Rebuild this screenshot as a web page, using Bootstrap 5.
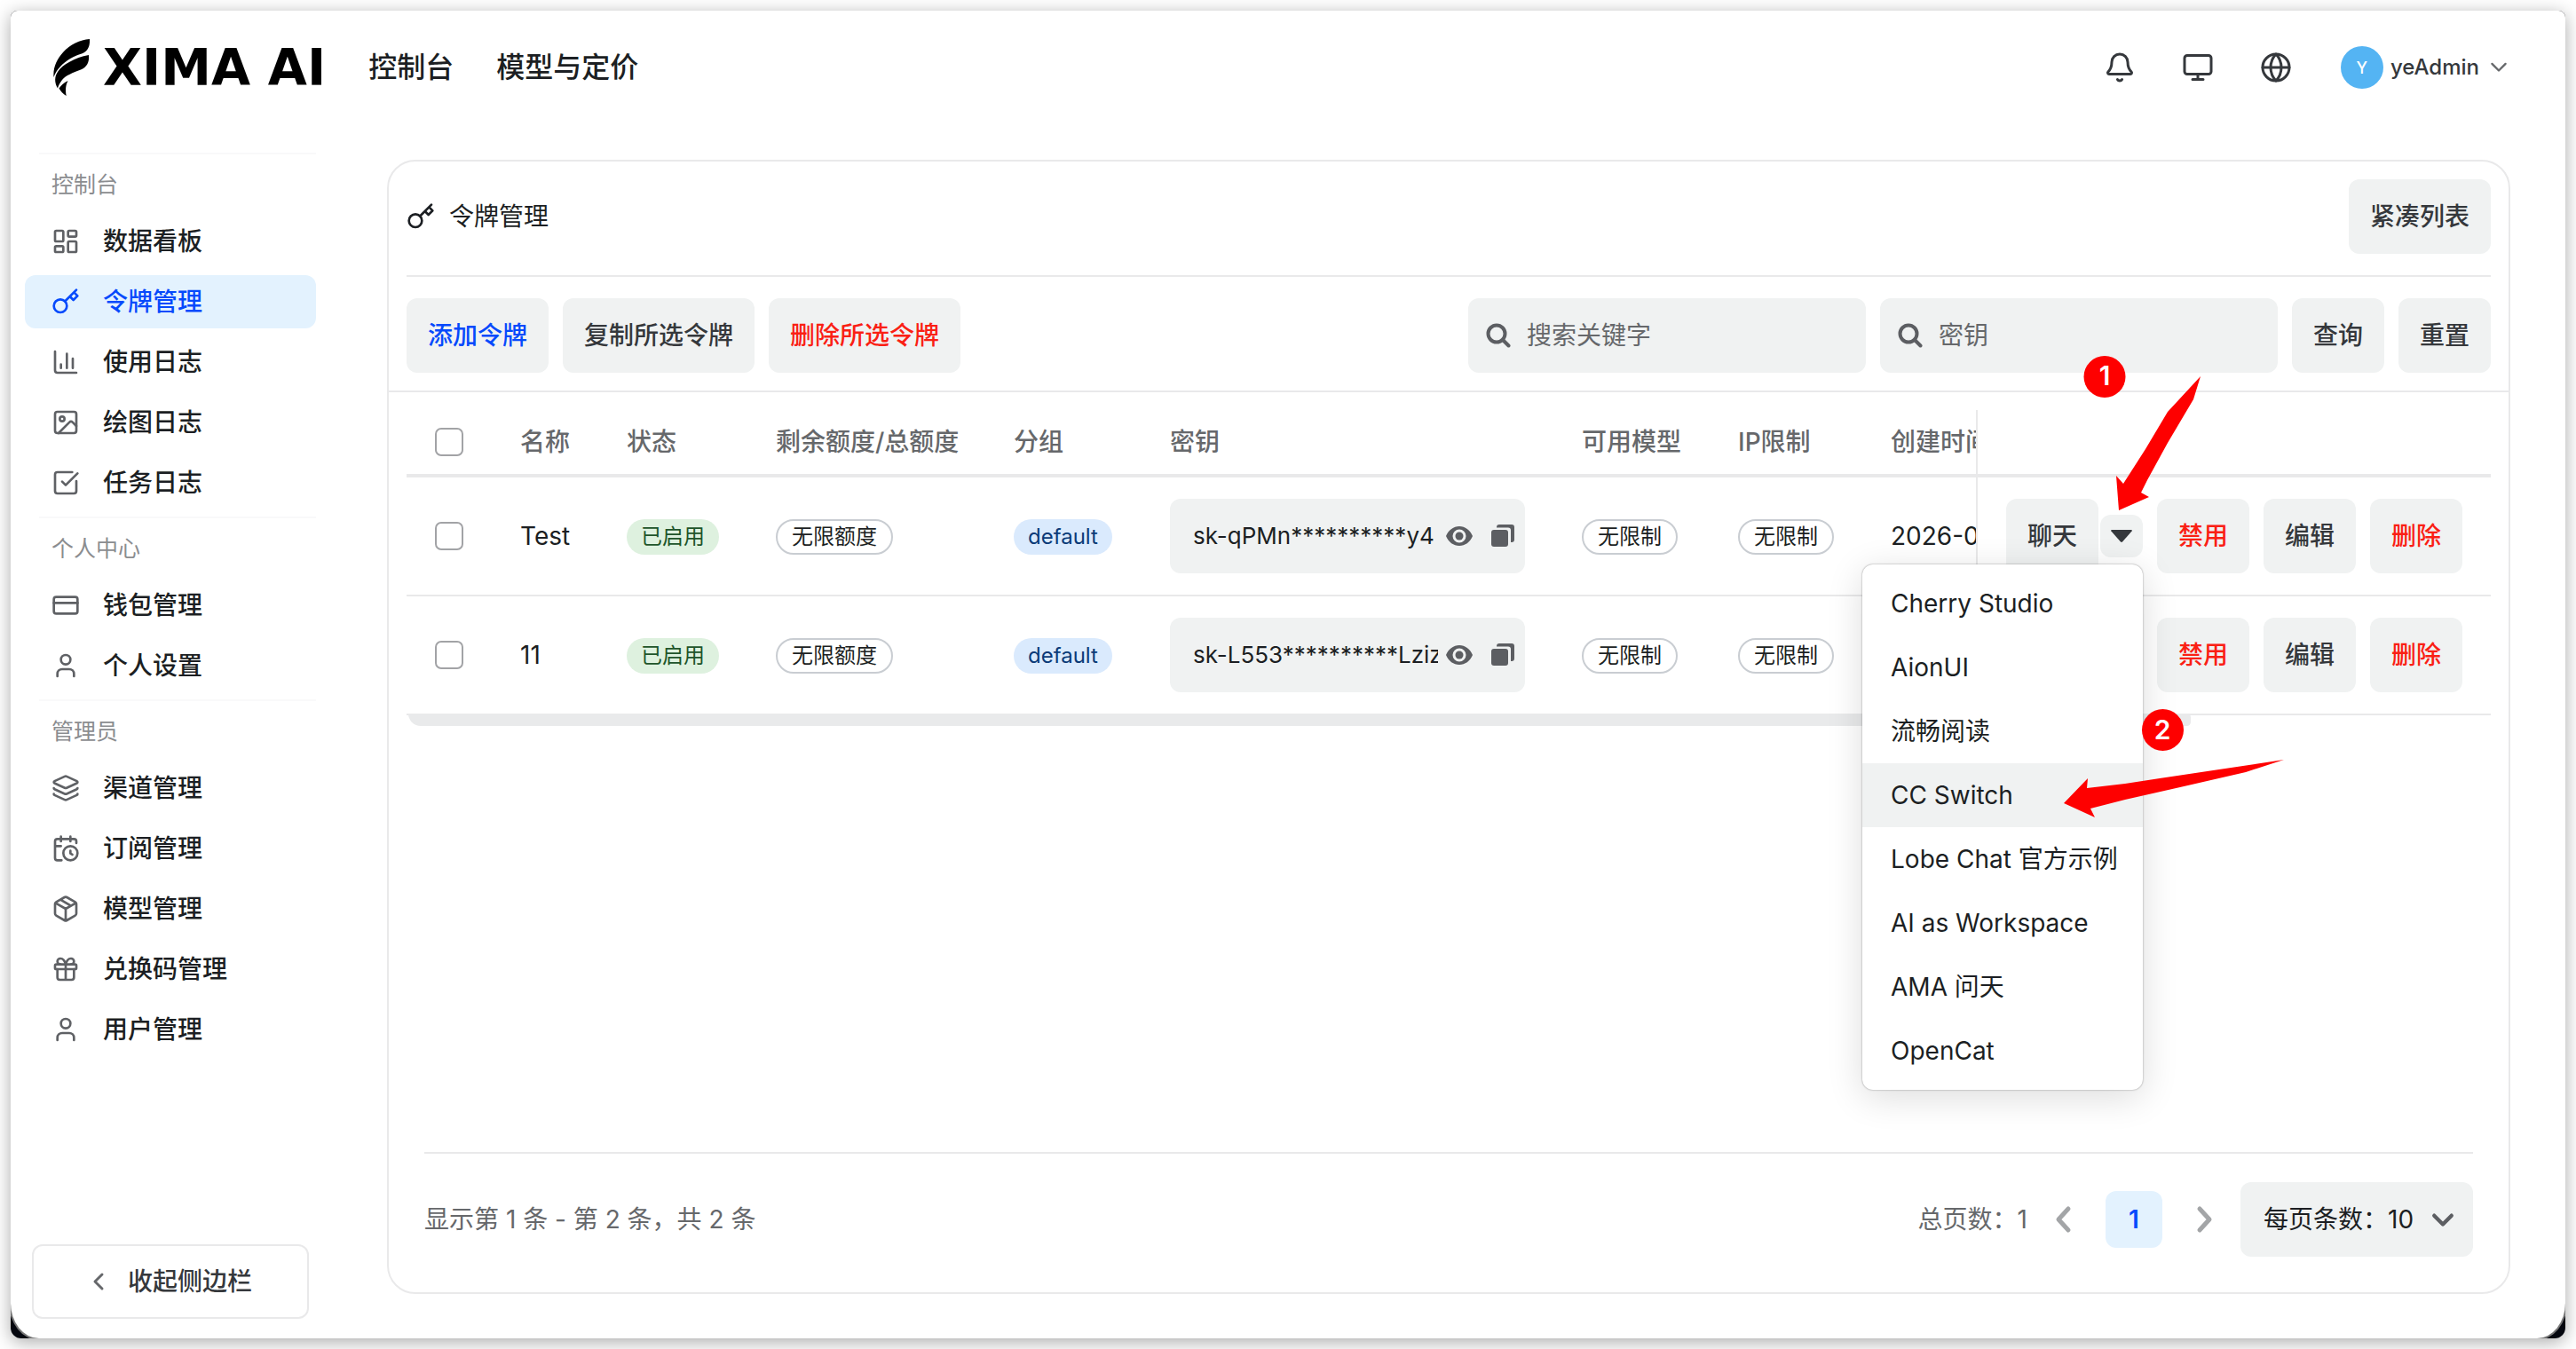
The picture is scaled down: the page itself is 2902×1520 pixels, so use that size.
<!DOCTYPE html>
<html lang="zh-CN">
<head>
<meta charset="utf-8">
<meta name="viewport" content="width=device-width, initial-scale=1">
<title>令牌管理 - XIMA AI</title>
<link href="https://cdn.jsdelivr.net/npm/bootstrap@5.3.0/dist/css/bootstrap.min.css" rel="stylesheet">
<style>
:root{--line:#e9e9ea;--fill:#f0f2f2;--ink:#1c1f23;--ink2:#66686b;--ink3:#8b8d90;--blue:#064afc;--blue-bg:#e3f2fe;--red:#fa2014}
body{font-family:Inter,"Noto Sans CJK SC",sans-serif;font-size:28px;line-height:40px;color:var(--ink);background:#fff;min-height:100vh;padding:12px}
svg{display:block;flex:none}
.ico{fill:none;stroke:currentColor;stroke-width:2;stroke-linecap:round;stroke-linejoin:round}
.frame{flex:1;background:#05070f;border-radius:8px 8px 12px 12px;overflow:hidden;box-shadow:0 4px 20px rgba(0,0,0,.34)}
.sheet{flex:1;background:#fff;border-radius:0 0 32px 32px/0 0 40px 40px;box-shadow:0 0 0 2px #777}
.topbar{height:128px;padding:0 60px 0 48px}
.brand-word{font:bold 57px/64px "DejaVu Sans",sans-serif;color:#000;margin-left:14px}
.topbar .nav-link{font-size:32px;font-weight:500;color:var(--ink);padding:0}
.tool-btn{width:72px;height:72px;padding:0;color:#35383c;display:flex;align-items:center;justify-content:center}
.avatar{width:48px;height:48px;border-radius:50%;background:#54b4f3;color:#fff;font-size:18px;font-weight:500}
.user-btn{font-size:24px;font-weight:500;color:#35383c;padding:0;gap:8px;margin-left:20px}
.side{width:344px;padding:32px 0 22px 16px}
.side-label{border-top:2px solid #f9f9fa;margin-left:16px;padding:16px 14px 16px;font-size:25px;line-height:36px;color:var(--ink3)}
.side-link{display:flex;align-items:center;height:60px;margin-bottom:8px;padding:0 30px;gap:26px;border-radius:12px;color:var(--ink);font-weight:500;text-decoration:none}
.side-link svg{color:#5f6165}
.side-link.active{background:var(--blue-bg);color:var(--blue)}
.side-link.active svg{color:var(--blue)}
.fold-btn{height:84px;margin:0 8px 0 8px;border:2px solid var(--line);border-radius:12px;background:#fff;font-size:28px;font-weight:500;color:#35383c;gap:24px}
.panel{flex:1;border:2px solid var(--line);border-radius:32px;margin:40px 62px 50px 80px}
.soft{height:84px;padding:0 24px;border:0;border-radius:12px;background:var(--fill);color:#35383c;font-size:28px;font-weight:500;white-space:nowrap}
.soft.t-blue,.t-blue{color:var(--blue)}
.soft.t-red,.t-red{color:var(--red)}
.panel-head{margin:0 20px;padding:20px 0 24px;border-bottom:2px solid var(--line)}
.panel-tools{padding:24px 20px 20px;border-bottom:2px solid var(--line);gap:16px}
.find{width:448px;height:84px;border-radius:12px;background:var(--fill);padding:0 20px;gap:18px;color:#5c5e62}
.find input,.keybox input{border:0;background:none;padding:0;font-size:28px;line-height:40px;color:var(--ink);min-width:0;flex:1;outline:0;box-shadow:none}
.keybox input{font-size:26px}
.find input::placeholder{color:var(--ink2);opacity:1}
.grid-wrap{margin:20px 20px 0}
.grid{table-layout:fixed;border-collapse:separate;border-spacing:0;color:var(--ink);margin:0}
.grid th,.grid td{padding:0 32px;border:0 solid var(--line);vertical-align:middle;white-space:nowrap}
.grid th{height:76px;border-bottom-width:4px;color:var(--ink2);font-weight:500}
.grid td{height:134px;border-bottom-width:2px}
.grid .cut{overflow:hidden;padding-right:0;text-overflow:clip}
.grid .ops{border-left-width:2px}
.tick{width:32px;height:32px;margin:0;border:2px solid #a2a3a6;border-radius:6px;display:block;float:none}
.pill{display:inline-block;height:40px;border-radius:20px;padding:0 16px;font-size:24px;line-height:40px;vertical-align:middle}
.p-green{background:#def1df;color:#20542a}
.p-blue{background:#daeafd;color:#0b3b78}
.p-line{border:2px solid #c9cdd2;line-height:36px}
.keybox{height:84px;border-radius:12px;background:var(--fill);padding:0 10px 0 26px;color:#5c5e62}
.keybox button{border:0;background:none;padding:0;color:inherit}
.arrow-btn{width:48px;height:48px;margin-left:2px;border:0;border-radius:12px;background:var(--fill);padding:0;display:flex;align-items:center;justify-content:center;color:#35383c}
.chat-menu{display:block;top:56px;right:0;left:auto;width:316px;padding:8px 0;font-size:28px;border:0;border-radius:12px;color:var(--ink);box-shadow:0 0 2px rgba(0,0,0,.45),0 8px 40px rgba(0,0,0,.14)}
.chat-menu .dropdown-item{height:72px;line-height:72px;padding:0 32px;color:var(--ink)}
.chat-menu .dropdown-item.hot{background:var(--fill)}
.marks{position:absolute;left:-64px;top:-180px;z-index:1100;pointer-events:none}
.marks text{font:600 30px Inter,sans-serif;fill:#fff;text-anchor:middle}
.hbar{position:relative;width:2008px;max-width:86%;height:14px;margin:-2px 0 0 2px;background:#e9eaeb;border-radius:0 6px 6px 20px}
.panel-foot{margin:auto 40px 0;padding:32px 0 40px;border-top:2px solid var(--line);color:var(--ink2)}
.page-btn{width:64px;height:64px;border:0;border-radius:12px;background:none;padding:0;color:#a3a5a7;display:flex;align-items:center;justify-content:center}
.page-btn.on{background:var(--blue-bg);color:var(--blue);font-weight:600}
.thick{stroke-width:5}
.thin{stroke-width:3;color:#66686b}
.caret-down{color:#66686b}
.size-pick{width:262px;height:84px;border:0;border-radius:12px;padding:0 20px 0 26px;font-size:28px;line-height:40px;color:var(--ink);background:var(--fill) url("data:image/svg+xml,%3Csvg xmlns='http://www.w3.org/2000/svg' viewBox='0 0 24 24'%3E%3Cpath d='M3 8l9 9 9-9' fill='none' stroke='%235c5e62' stroke-width='4' stroke-linecap='round' stroke-linejoin='round'/%3E%3C/svg%3E") no-repeat right 21px center/26px 26px}
</style>
</head>
<body class="d-flex">
<div class="frame d-flex">
<div class="sheet d-flex flex-column">

<nav class="topbar d-flex align-items-center">
  <a href="#" class="d-flex align-items-center text-decoration-none">
    <svg width="42" height="66" viewBox="60 43 42 66" aria-hidden="true">
      <path d="M101 44C101.500 52 99 58 92 60.500C84 63 74 68 68 75C64 79 62 83 60.500 87C59.500 76 64 67 71 59C79 50 90 45 101 44Z"/>
      <path d="M100 62C101 71 97 76 91 78.500C82 82 74 85 70 90C67 94 66 96 65 99.500C61 93 61.500 86 65 81C70 73 84 65 100 62Z"/>
      <path d="M76.500 91C74 96 73.500 101 74.700 108C71 106 68.500 103 66.500 99.500C69 96 72 93 76.500 91Z"/>
    </svg>
    <span class="brand-word">XIMA AI</span>
  </a>
  <ul class="nav ms-5 gap-5">
    <li class="nav-item"><a class="nav-link" href="#">控制台</a></li>
    <li class="nav-item"><a class="nav-link" href="#">模型与定价</a></li>
  </ul>
  <div class="d-flex align-items-center gap-3 ms-auto">
    <button class="btn tool-btn" type="button" aria-label="通知"><svg class="ico" width="36" height="36" viewBox="0 0 24 24"><path d="M10.268 21a2 2 0 0 0 3.464 0M3.262 15.326A1 1 0 0 0 4 17h16a1 1 0 0 0 .74-1.673C19.410 13.956 18 12.499 18 8A6 6 0 0 0 6 8c0 4.499-1.411 5.956-2.738 7.326"/></svg></button>
    <button class="btn tool-btn" type="button" aria-label="主题"><svg class="ico" width="36" height="36" viewBox="0 0 24 24"><rect width="20" height="14" x="2" y="3" rx="2"/><path d="M8 21h8M12 17v4"/></svg></button>
    <button class="btn tool-btn" type="button" aria-label="语言"><svg class="ico" width="36" height="36" viewBox="0 0 24 24"><circle cx="12" cy="12" r="10"/><path d="M12 2a14.500 14.500 0 0 0 0 20 14.500 14.500 0 0 0 0-20M2 12h20"/></svg></button>
    <button class="btn user-btn d-flex align-items-center" type="button">
      <span class="avatar d-flex align-items-center justify-content-center">Y</span><span>yeAdmin</span>
      <svg class="ico caret-down" width="28" height="28" viewBox="0 0 24 24"><path d="m5.500 8.500 6.500 6.500 6.500-6.500"/></svg>
    </button>
  </div>
</nav>

<div class="d-flex flex-fill">
<aside class="side d-flex flex-column flex-shrink-0">
  <div class="side-label">控制台</div>
  <a class="side-link" href="#"><svg class="ico" width="32" height="32" viewBox="0 0 24 24"><rect width="7" height="9" x="3" y="3" rx="1"/><rect width="7" height="5" x="14" y="3" rx="1"/><rect width="7" height="9" x="14" y="12" rx="1"/><rect width="7" height="5" x="3" y="16" rx="1"/></svg>数据看板</a>
  <a class="side-link active" href="#" aria-current="page"><svg class="ico" width="32" height="32" viewBox="0 0 24 24"><circle cx="7.500" cy="15.500" r="5.500"/><path d="m21 2-9.600 9.600M15.500 7.500l3 3L22 7l-3-3"/></svg>令牌管理</a>
  <a class="side-link" href="#"><svg class="ico" width="32" height="32" viewBox="0 0 24 24"><path d="M3 3v16a2 2 0 0 0 2 2h16M18 17V9M13 17V5M8 17v-3"/></svg>使用日志</a>
  <a class="side-link" href="#"><svg class="ico" width="32" height="32" viewBox="0 0 24 24"><rect width="18" height="18" x="3" y="3" rx="2"/><circle cx="9" cy="9" r="2"/><path d="m21 15-3.086-3.086a2 2 0 0 0-2.828 0L6 21"/></svg>绘图日志</a>
  <a class="side-link" href="#"><svg class="ico" width="32" height="32" viewBox="0 0 24 24"><path d="M21 10.500V19a2 2 0 0 1-2 2H5a2 2 0 0 1-2-2V5a2 2 0 0 1 2-2h12.500M9 11l3 3L22 4"/></svg>任务日志</a>
  <div class="side-label">个人中心</div>
  <a class="side-link" href="#"><svg class="ico" width="32" height="32" viewBox="0 0 24 24"><rect width="20" height="14" x="2" y="5" rx="2"/><path d="M2 10h20"/></svg>钱包管理</a>
  <a class="side-link" href="#"><svg class="ico" width="32" height="32" viewBox="0 0 24 24"><path d="M19 21v-2a4 4 0 0 0-4-4H9a4 4 0 0 0-4 4v2"/><circle cx="12" cy="7" r="4"/></svg>个人设置</a>
  <div class="side-label">管理员</div>
  <a class="side-link" href="#"><svg class="ico" width="32" height="32" viewBox="0 0 24 24"><path d="M12.830 2.180a2 2 0 0 0-1.660 0L2.600 6.080a1 1 0 0 0 0 1.830l8.580 3.910a2 2 0 0 0 1.660 0l8.580-3.900a1 1 0 0 0 0-1.830zM2 12a1 1 0 0 0 .58.91l8.600 3.910a2 2 0 0 0 1.650 0l8.580-3.900A1 1 0 0 0 22 12M2 17a1 1 0 0 0 .58.91l8.600 3.910a2 2 0 0 0 1.650 0l8.580-3.900A1 1 0 0 0 22 17"/></svg>渠道管理</a>
  <a class="side-link" href="#"><svg class="ico" width="32" height="32" viewBox="0 0 24 24"><path d="M16 14v2.200l1.600 1M16 2v4M21 7.500V6a2 2 0 0 0-2-2H5a2 2 0 0 0-2 2v14a2 2 0 0 0 2 2h3.500M3 10h5M8 2v4"/><circle cx="16" cy="16" r="6"/></svg>订阅管理</a>
  <a class="side-link" href="#"><svg class="ico" width="32" height="32" viewBox="0 0 24 24"><path d="M11 21.730a2 2 0 0 0 2 0l7-4A2 2 0 0 0 21 16V8a2 2 0 0 0-1-1.730l-7-4a2 2 0 0 0-2 0l-7 4A2 2 0 0 0 3 8v8a2 2 0 0 0 1 1.730zM12 22V12M3.290 7 12 12l8.710-5M7.500 4.270l9 5.150"/></svg>模型管理</a>
  <a class="side-link" href="#"><svg class="ico" width="32" height="32" viewBox="0 0 24 24"><rect x="3" y="8" width="18" height="4" rx="1"/><path d="M12 8v13M19 12v7a2 2 0 0 1-2 2H7a2 2 0 0 1-2-2v-7M7.500 8a2.500 2.500 0 0 1 0-5A4.800 8 0 0 1 12 8a4.800 8 0 0 1 4.500-5 2.500 2.500 0 0 1 0 5"/></svg>兑换码管理</a>
  <a class="side-link" href="#"><svg class="ico" width="32" height="32" viewBox="0 0 24 24"><path d="M19 21v-2a4 4 0 0 0-4-4H9a4 4 0 0 0-4 4v2"/><circle cx="12" cy="7" r="4"/></svg>用户管理</a>
  <button class="fold-btn d-flex align-items-center justify-content-center mt-auto" type="button"><svg class="ico thin" width="20" height="32" viewBox="0 0 20 32"><path d="m15 8-8 8 8 8"/></svg>收起侧边栏</button>
</aside>

<main class="panel d-flex flex-column">
  <div class="panel-head d-flex align-items-center justify-content-between">
    <div class="d-flex align-items-center"><svg class="ico" width="32" height="32" viewBox="0 0 24 24"><circle cx="7.500" cy="15.500" r="5.500"/><path d="m21 2-9.600 9.600M15.500 7.500l3 3L22 7l-3-3"/></svg><span class="ms-3">令牌管理</span></div>
    <button class="btn soft" type="button">紧凑列表</button>
  </div>
  <div class="panel-tools d-flex align-items-center">
    <button class="btn soft t-blue" type="button">添加令牌</button>
    <button class="btn soft" type="button">复制所选令牌</button>
    <button class="btn soft t-red" type="button">删除所选令牌</button>
    <label class="find d-flex align-items-center ms-auto"><svg width="28" height="28" viewBox="0 0 28 28" fill="none" stroke="currentColor" stroke-width="4" stroke-linecap="round"><circle cx="12" cy="12" r="9.500"/><path d="m19 19 6.500 6.500"/></svg><input type="text" placeholder="搜索关键字" aria-label="搜索关键字"></label>
    <label class="find d-flex align-items-center"><svg width="28" height="28" viewBox="0 0 28 28" fill="none" stroke="currentColor" stroke-width="4" stroke-linecap="round"><circle cx="12" cy="12" r="9.500"/><path d="m19 19 6.500 6.500"/></svg><input type="text" placeholder="密钥" aria-label="密钥"></label>
    <button class="btn soft" type="button">查询</button>
    <button class="btn soft" type="button">重置</button>
  </div>

  <div class="grid-wrap">
  <table class="table grid">
    <colgroup><col style="width:96px"><col style="width:120px"><col style="width:168px"><col style="width:268px"><col style="width:176px"><col><col style="width:176px"><col style="width:172px"><col style="width:128px"><col style="width:580px"></colgroup>
    <thead><tr>
      <th><input class="form-check-input tick" type="checkbox" aria-label="全选"></th><th>名称</th><th>状态</th><th>剩余额度/总额度</th><th>分组</th><th>密钥</th><th>可用模型</th><th>IP限制</th><th class="cut">创建时间</th><th class="ops"></th>
    </tr></thead>
    <tbody>
    <tr>
      <td><input class="form-check-input tick" type="checkbox" aria-label="选择 Test"></td><td>Test</td>
      <td><span class="pill p-green">已启用</span></td><td><span class="pill p-line">无限额度</span></td><td><span class="pill p-blue">default</span></td>
      <td><div class="keybox d-flex align-items-center"><input type="text" readonly value="sk-qPMn**********y4" aria-label="Test 密钥"><button class="ms-2" type="button" aria-label="显示"><svg width="32" height="32" viewBox="0 0 32 32"><path fill="currentColor" fill-rule="evenodd" d="M1 16C4 9 9.500 5 16 5s12 4 15 11c-3 7-8.500 11-15 11S4 23 1 16ZM16 8.500a7.500 7.500 0 1 0 0 15 7.500 7.500 0 0 0 0-15Z"/><circle cx="16" cy="16" r="4.500" fill="currentColor"/></svg></button><button class="ms-3" type="button" aria-label="复制"><svg width="32" height="32" viewBox="0 0 32 32" fill="currentColor"><rect x="4" y="9" width="19" height="19" rx="3"/><path d="M10 6.500V6a3 3 0 0 1 3-3h14a3 3 0 0 1 3 3v14a3 3 0 0 1-3 3h-1V9.500a3 3 0 0 0-3-3Z"/></svg></button></div></td>
      <td><span class="pill p-line">无限制</span></td><td><span class="pill p-line">无限制</span></td><td class="cut">2026-0</td>
      <td class="ops"><div class="d-flex align-items-center gap-3">
        <div class="d-flex align-items-center"><button class="btn soft" type="button">聊天</button>
          <div class="position-relative">
            <button class="arrow-btn" type="button" aria-label="更多" aria-expanded="true"><svg width="24" height="16" viewBox="0 0 24 16"><path fill="currentColor" d="M1 1h22a1 1 0 0 1 .6 1.500L13 14.500a1.500 1.500 0 0 1-2 0L.4 2.500A1 1 0 0 1 1 1Z"/></svg></button>
            <ul class="dropdown-menu chat-menu show">
              <li><a class="dropdown-item" href="#">Cherry Studio</a></li>
              <li><a class="dropdown-item" href="#">AionUI</a></li>
              <li><a class="dropdown-item" href="#">流畅阅读</a></li>
              <li><a class="dropdown-item hot" href="#">CC Switch</a></li>
              <li><a class="dropdown-item" href="#">Lobe Chat 官方示例</a></li>
              <li><a class="dropdown-item" href="#">AI as Workspace</a></li>
              <li><a class="dropdown-item" href="#">AMA 问天</a></li>
              <li><a class="dropdown-item" href="#">OpenCat</a></li>
            </ul>
            <svg class="marks" width="300" height="540" viewBox="2300 400 300 540">
              <g fill="#fe0000">
                <circle cx="2371" cy="424.500" r="23.500"/><circle cx="2436.500" cy="822.500" r="23.500"/>
                <path d="M2479 424L2471 450 2442 499 2419 541 2412 555 2421 560 2387 575 2384 536 2392 545 2417 506 2442 464Z"/>
                <path d="M2573 856L2530 870 2456 887 2394 901 2355 911 2360 921 2325 905 2352 877 2351 888 2394 883 2433 877 2500 867Z"/>
              </g>
              <text x="2371" y="434">1</text><text x="2436" y="833">2</text>
            </svg>
          </div>
        </div>
        <button class="btn soft t-red" type="button">禁用</button><button class="btn soft" type="button">编辑</button><button class="btn soft t-red" type="button">删除</button>
      </div></td>
    </tr>
    <tr>
      <td><input class="form-check-input tick" type="checkbox" aria-label="选择 11"></td><td>11</td>
      <td><span class="pill p-green">已启用</span></td><td><span class="pill p-line">无限额度</span></td><td><span class="pill p-blue">default</span></td>
      <td><div class="keybox d-flex align-items-center"><input type="text" readonly value="sk-L553**********Lziz" aria-label="11 密钥"><button class="ms-2" type="button" aria-label="显示"><svg width="32" height="32" viewBox="0 0 32 32"><path fill="currentColor" fill-rule="evenodd" d="M1 16C4 9 9.500 5 16 5s12 4 15 11c-3 7-8.500 11-15 11S4 23 1 16ZM16 8.500a7.500 7.500 0 1 0 0 15 7.500 7.500 0 0 0 0-15Z"/><circle cx="16" cy="16" r="4.500" fill="currentColor"/></svg></button><button class="ms-3" type="button" aria-label="复制"><svg width="32" height="32" viewBox="0 0 32 32" fill="currentColor"><rect x="4" y="9" width="19" height="19" rx="3"/><path d="M10 6.500V6a3 3 0 0 1 3-3h14a3 3 0 0 1 3 3v14a3 3 0 0 1-3 3h-1V9.500a3 3 0 0 0-3-3Z"/></svg></button></div></td>
      <td><span class="pill p-line">无限制</span></td><td><span class="pill p-line">无限制</span></td><td class="cut"></td>
      <td class="ops"><div class="d-flex align-items-center justify-content-end gap-3">
        <button class="btn soft t-red" type="button">禁用</button><button class="btn soft" type="button">编辑</button><button class="btn soft t-red" type="button">删除</button>
      </div></td>
    </tr>
    </tbody>
  </table>
  <div class="hbar"></div>
  </div>

  <div class="panel-foot d-flex align-items-center">
    <span>显示第 1 条 - 第 2 条，共 2 条</span>
    <span class="ms-auto me-2">总页数：1</span>
    <div class="d-flex gap-3 me-2">
      <button class="page-btn" type="button" aria-label="上一页"><svg class="ico thick" width="32" height="32" viewBox="0 0 32 32"><path d="M22 4 11 16l11 12"/></svg></button>
      <button class="page-btn on" type="button">1</button>
      <button class="page-btn" type="button" aria-label="下一页"><svg class="ico thick" width="32" height="32" viewBox="0 0 32 32"><path d="m10 4 11 12-11 12"/></svg></button>
    </div>
    <select class="form-select size-pick" aria-label="每页条数"><option>每页条数：10</option></select>
  </div>
</main>
</div>
</div>
</div>
<script src="https://cdn.jsdelivr.net/npm/bootstrap@5.3.0/dist/js/bootstrap.bundle.min.js"></script>
</body>
</html>
